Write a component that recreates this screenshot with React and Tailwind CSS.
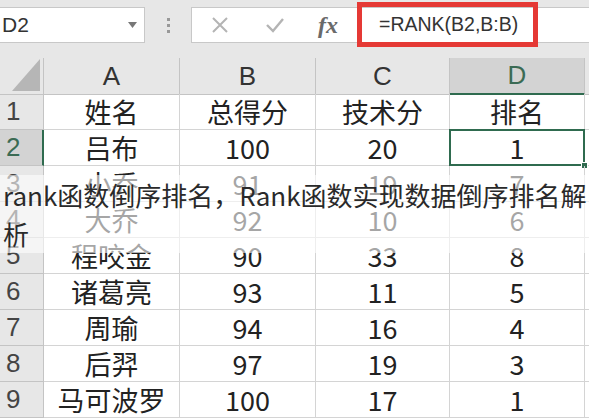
import React from "react";

const rows = [
  ["姓名", "总得分", "技术分", "排名"],
  ["吕布", "100", "20", "1"],
  ["小乔", "91", "19", "7"],
  ["大乔", "92", "10", "6"],
  ["程咬金", "90", "33", "8"],
  ["诸葛亮", "93", "11", "5"],
  ["周瑜", "94", "16", "4"],
  ["后羿", "97", "19", "3"],
  ["马可波罗", "100", "17", "1"],
];

const cjk = { fontFamily: '"Noto Sans CJK SC", "Noto Sans", sans-serif' };

export default function App() {
  return (
    <div className="relative w-[589px] h-[418px] overflow-hidden bg-[#e7e7e7]" style={cjk}>
      {/* formula bar */}
      <div className="flex items-start h-[58px] pt-[7px]">
        <div className="relative w-[145px] h-[36px] bg-white border border-[#c8c8c8] border-l-0 flex items-center">
          <span className="pl-[2px] text-[21px] text-[#333]" style={{ fontFamily: '"Liberation Sans", sans-serif' }}>D2</span>
          <svg className="absolute left-[128px] top-[14px]" width="9" height="6" viewBox="0 0 9 6">
            <path d="M0 0 L9 0 L4.5 6 Z" fill="#777" />
          </svg>
        </div>
        <div className="w-[46px] h-[36px] flex flex-col items-center justify-center gap-[3px]">
          <div className="w-[3px] h-[3px] bg-[#999]" />
          <div className="w-[3px] h-[3px] bg-[#999]" />
          <div className="w-[3px] h-[3px] bg-[#999]" />
        </div>
        <div className="flex-1 h-[36px] bg-white border border-[#c8c8c8] border-r-0 flex items-center">
          <svg className="ml-[19px]" width="18" height="18" viewBox="0 0 18 18">
            <path d="M2 2 L16 16 M16 2 L2 16" stroke="#b4b4b4" strokeWidth="2" />
          </svg>
          <svg className="ml-[36px]" width="20" height="18" viewBox="0 0 20 18">
            <path d="M2 9 L8 15 L18 3" stroke="#b4b4b4" strokeWidth="2.4" fill="none" />
          </svg>
          <span className="ml-[33px] text-[24px] italic font-bold text-[#6a6a6a]" style={{ fontFamily: '"Liberation Serif", serif' }}>fx</span>
          <span className="ml-[41px] text-[19.5px] text-[#333]" style={{ fontFamily: '"Liberation Sans", sans-serif' }}>=RANK(B2,B:B)</span>
        </div>
      </div>

      {/* red annotation box */}
      <div className="absolute left-[357px] top-[2px] w-[181px] h-[45px] border-[5px] border-[#e53935]" />

      {/* sheet */}
      <div className="grid grid-cols-[44px_136px_136px_134px_135px_1fr] auto-rows-[36px] bg-white text-[#222]">
        {/* header row */}
        <div className="h-[37px] relative bg-[#e7e7e7] border-r border-b border-[#c4c4c4]">
          <svg className="absolute right-[3px] bottom-[3px]" width="28" height="32" viewBox="0 0 28 32">
            <path d="M28 0 L28 32 L0 32 Z" fill="#b6b6b6" />
          </svg>
        </div>
        {["A", "B", "C"].map((c) => (
          <div key={c} className="h-[37px] flex items-center justify-center bg-[#e7e7e7] border-r border-b border-[#c4c4c4] text-[26px] text-[#333]" style={{ fontFamily: '"Liberation Sans", sans-serif' }}>
            {c}
          </div>
        ))}
        <div className="h-[37px] flex items-center justify-center bg-[#d3d3d3] border-r border-[#c4c4c4] border-b-2 border-b-[#2f6b4f] text-[26px] text-[#3b6b54]" style={{ fontFamily: '"Liberation Sans", sans-serif' }}>
          D
        </div>
        <div className="h-[37px] bg-[#e7e7e7] border-b border-[#c4c4c4]" />

        {rows.map((r, i) => {
          const sel = i === 1;
          return (
            <React.Fragment key={i}>
              <div
                className={
                  sel
                    ? "flex items-center pl-[6px] bg-[#d3d3d3] border-b border-[#c4c4c4] border-r-2 border-r-[#2f6b4f] text-[26px] text-[#3b6b54]"
                    : "flex items-center pl-[6px] bg-[#e7e7e7] border-r border-b border-[#c4c4c4] text-[26px] text-[#444]"
                }
                style={{ fontFamily: '"Liberation Sans", sans-serif' }}
              >
                {i + 1}
              </div>
              {r.map((v, j) => (
                <div key={j} className="relative flex items-center justify-center border-r border-b border-[#d4d4d4] text-[27px] leading-none">
                  {v}
                  {sel && j === 3 && (
                    <>
                      <div className="absolute -left-[1px] -top-[1px] -right-[1px] -bottom-[1px] border-2 border-[#2f6b4f]" />
                      <div className="absolute -right-[4px] -bottom-[4px] w-[7px] h-[7px] bg-[#2f6b4f] border border-white" />
                    </>
                  )}
                </div>
              ))}
              <div className="border-b border-[#d4d4d4]" />
            </React.Fragment>
          );
        })}
      </div>

      {/* caption overlay */}
      <div className="absolute left-0 right-0 top-[175px] bg-white/60 pl-[3px] pr-[2px] text-[26px] leading-[39px] text-[#2a2a2a]">
        rank函数倒序排名，Rank函数实现数据倒序排名解析
      </div>
    </div>
  );
}
